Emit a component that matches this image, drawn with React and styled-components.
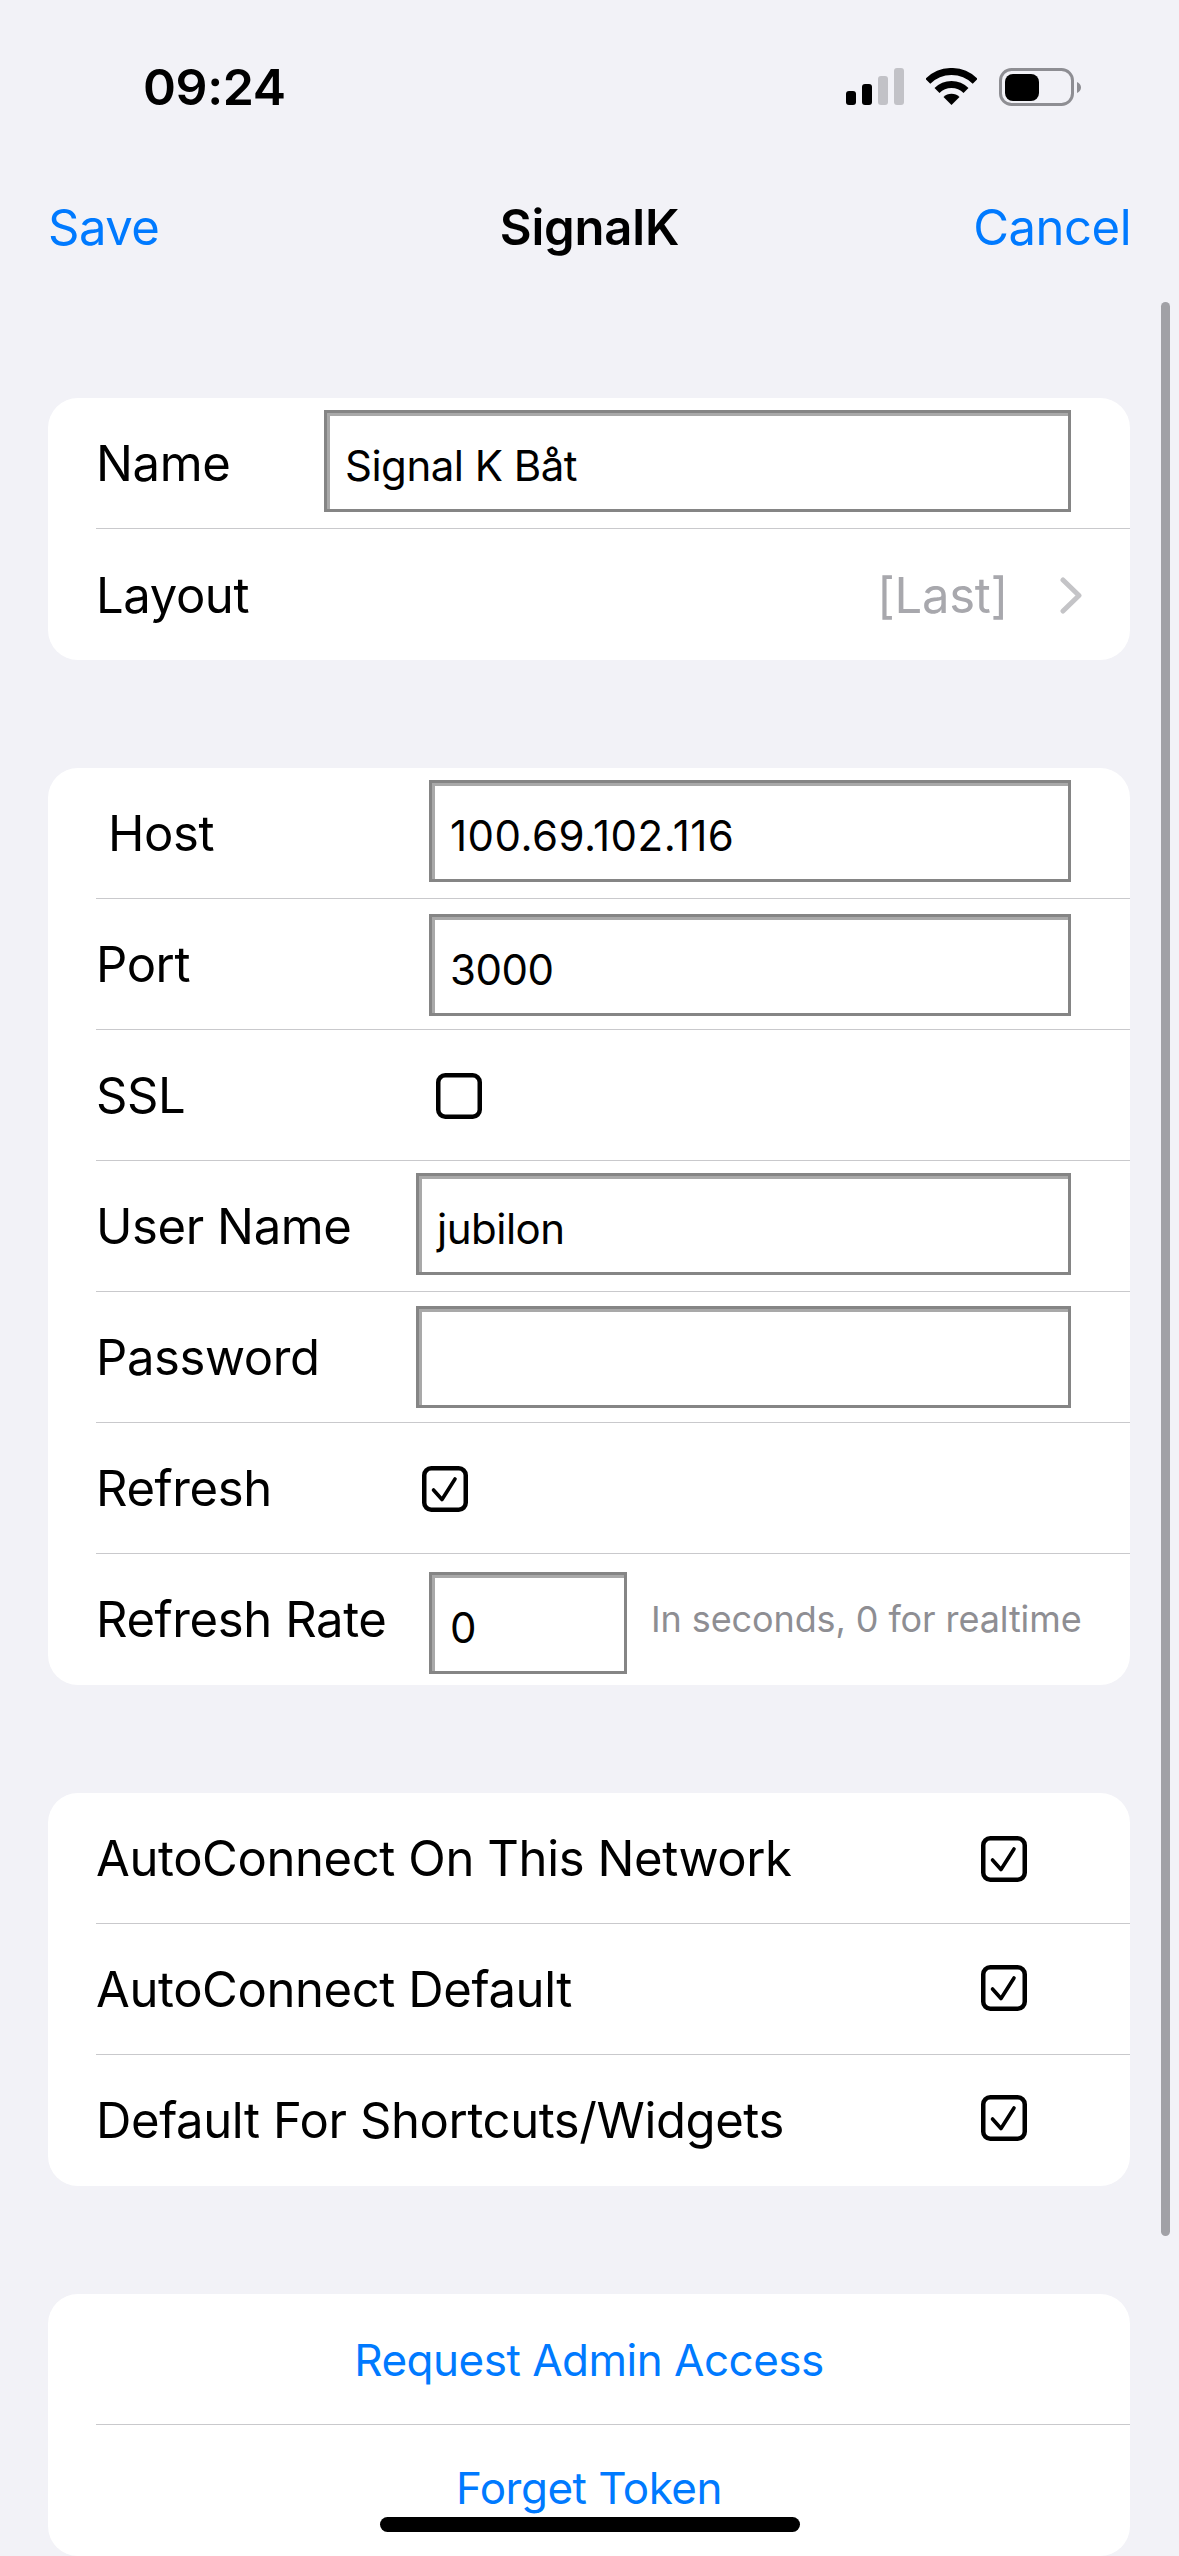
import styled, { createGlobalStyle } from "styled-components";

const GlobalStyle = createGlobalStyle`
  html, body {
    margin: 0;
    padding: 0;
    background: #f2f2f7;
  }
  * {
    box-sizing: border-box;
  }
`;

const Page = styled.div`
  position: relative;
  width: 1179px;
  height: 2556px;
  overflow: hidden;
  background: #f2f2f7;
  color: #000;
  font-family: Inter, "Liberation Sans", sans-serif;
`;

const StatusBar = styled.div`
  height: 176px;
  padding: 68px 98px 0 143px;
  display: flex;
  justify-content: space-between;
  align-items: flex-start;
`;

const Clock = styled.div`
  font-size: 50px;
  font-weight: 600;
  line-height: 38px;
  letter-spacing: -0.4px;
`;

const StatusIcons = styled.div`
  display: flex;
  align-items: flex-start;
  gap: 22px;
  svg {
    display: block;
  }
`;

const NavBar = styled.div`
  height: 100px;
  padding: 4px 48px 0 48px;
  display: grid;
  grid-template-columns: 1fr auto 1fr;
  align-items: center;
`;

const NavButton = styled.div`
  font-size: 49px;
  color: #007aff;
  line-height: 60px;
  letter-spacing: -0.5px;
  text-align: ${(p) => p.$align || "left"};
`;

const NavTitle = styled.div`
  font-size: 49px;
  font-weight: 600;
  line-height: 60px;
  letter-spacing: -0.2px;
`;

const Form = styled.div`
  margin-top: 122px;
  padding: 0 49px 0 48px;
  display: flex;
  flex-direction: column;
  gap: 108px;
`;

const Card = styled.div`
  background: #fff;
  border-radius: 30px;
  overflow: hidden;
`;

const Row = styled.div`
  height: 131px;
  margin-left: 48px;
  display: flex;
  align-items: flex-start;
  &:not(:last-child) {
    border-bottom: 1.5px solid #c9c9cc;
  }
`;

const CheckRow = styled(Row)`
  padding-right: 103px;
`;

const Label = styled.div`
  width: ${(p) => p.$width}px;
  flex-shrink: 0;
  padding-left: ${(p) => p.$indent || 0}px;
  font-size: 49px;
  line-height: ${(p) => p.$line || 131}px;
  letter-spacing: -0.4px;
  white-space: nowrap;
`;

const WideLabel = styled(Label)`
  width: auto;
  flex: 1;
`;

const Field = styled.div`
  width: ${(p) => p.$width}px;
  height: 102px;
  margin-top: ${(p) => p.$top}px;
  flex-shrink: 0;
  padding: 8px 0 0 18px;
  display: flex;
  align-items: center;
  border: 3px solid #858585;
  box-shadow: inset 3px 3px 0 #a9a9a9;
  font-size: 42px;
  letter-spacing: ${(p) => p.$spacing ?? -0.5}px;
  background: #fff;
`;

const Hint = styled.div`
  margin: 40px 0 0 24px;
  font-size: 36px;
  line-height: 50px;
  letter-spacing: -0.1px;
  color: #8e8e93;
  white-space: nowrap;
`;

const Box = styled.svg`
  display: block;
  flex-shrink: 0;
  margin-top: ${(p) => p.$top}px;
`;

const Detail = styled.div`
  margin-left: auto;
  display: flex;
  align-items: center;
  height: 132px;
  padding-right: 47px;
  gap: 52px;
  font-size: 49px;
  color: #a8a8ad;
  letter-spacing: -0.3px;
`;

const Action = styled.div`
  width: calc(100% + 48px);
  margin-left: -48px;
  text-align: center;
  color: #007aff;
  font-size: 44px;
  line-height: ${(p) => p.$line}px;
  letter-spacing: -0.5px;
`;

const Scrollbar = styled.div`
  position: absolute;
  left: 1161px;
  top: 302px;
  width: 9px;
  height: 1934px;
  border-radius: 5px;
  background: #a1a1a6;
`;

const HomeIndicator = styled.div`
  position: absolute;
  left: 380px;
  top: 2517px;
  width: 420px;
  height: 15px;
  border-radius: 8px;
  background: #000;
`;

const SignalIcon = () => (
  <svg width="58" height="37" viewBox="0 0 58 37">
    <rect x="0" y="23" width="10" height="14" rx="3" fill="#000" />
    <rect x="16" y="16" width="10" height="21" rx="3" fill="#000" />
    <rect x="32" y="8" width="10" height="29" rx="3" fill="#c2c2c7" />
    <rect x="48" y="0" width="10" height="37" rx="3" fill="#c2c2c7" />
  </svg>
);

const WifiIcon = () => (
  <svg width="51" height="37" viewBox="0 0 51 37">
    <path d="M1.8 13.3A33.5 33.5 0 0 1 49.2 13.3" fill="none" stroke="#000" strokeWidth="7" />
    <path d="M11 22.5A20.5 20.5 0 0 1 40 22.5" fill="none" stroke="#000" strokeWidth="7" />
    <path d="M25.5 37L17.5 29A11.3 11.3 0 0 1 33.5 29Z" fill="#000" />
  </svg>
);

const BatteryIcon = () => (
  <svg width="82" height="38" viewBox="0 0 82 38">
    <rect x="1.5" y="1.5" width="72" height="35" rx="11" fill="none" stroke="#8e8e93" strokeWidth="3" />
    <rect x="6" y="6" width="34" height="27" rx="8" fill="#000" />
    <path d="M78 14C80.5 15 82 17 82 19.5C82 22 80.5 24 78 25Z" fill="#8e8e93" />
  </svg>
);

const CheckBox = ({ checked, top }) => (
  <Box $top={top} width="46" height="46" viewBox="0 0 46 46">
    <rect x="2.25" y="2.25" width="41.5" height="41.5" rx="7" fill="#fff" stroke="#000" strokeWidth="4.5" />
    {checked && (
      <path
        d="M11.5 24L20 33.5L33 13"
        fill="none"
        stroke="#000"
        strokeWidth="3.6"
        strokeLinecap="round"
        strokeLinejoin="round"
      />
    )}
  </Box>
);

const Chevron = () => (
  <svg width="23" height="37" viewBox="0 0 23 37">
    <path d="M3 3L19 18.5L3 34" fill="none" stroke="#c4c4c7" strokeWidth="5" strokeLinecap="round" strokeLinejoin="round" />
  </svg>
);

export default function App() {
  return (
    <Page>
      <GlobalStyle />
      <StatusBar>
        <Clock>09:24</Clock>
        <StatusIcons>
          <SignalIcon />
          <WifiIcon />
          <BatteryIcon />
        </StatusIcons>
      </StatusBar>

      <NavBar>
        <NavButton>Save</NavButton>
        <NavTitle>SignalK</NavTitle>
        <NavButton $align="right">Cancel</NavButton>
      </NavBar>

      <Form>
        <Card>
          <Row>
            <Label $width={228}>Name</Label>
            <Field $width={747} $top={12}>Signal K Båt</Field>
          </Row>
          <Row>
            <Label $width={300} $line={133}>Layout</Label>
            <Detail>
              [Last]
              <Chevron />
            </Detail>
          </Row>
        </Card>

        <Card>
          <Row>
            <Label $width={333} $indent={12}>Host</Label>
            <Field $width={642} $top={12} $spacing={0.5}>100.69.102.116</Field>
          </Row>
          <Row>
            <Label $width={333}>Port</Label>
            <Field $width={642} $top={15}>3000</Field>
          </Row>
          <Row>
            <Label $width={340}>SSL</Label>
            <CheckBox top={43} />
          </Row>
          <Row>
            <Label $width={320}>User Name</Label>
            <Field $width={655} $top={12}>jubilon</Field>
          </Row>
          <Row>
            <Label $width={320}>Password</Label>
            <Field $width={655} $top={14} />
          </Row>
          <Row>
            <Label $width={326}>Refresh</Label>
            <CheckBox checked top={43} />
          </Row>
          <Row>
            <Label $width={333}>Refresh Rate</Label>
            <Field $width={198} $top={18}>0</Field>
            <Hint>In seconds, 0 for realtime</Hint>
          </Row>
        </Card>

        <Card>
          <CheckRow>
            <WideLabel>AutoConnect On This Network</WideLabel>
            <CheckBox checked top={43} />
          </CheckRow>
          <CheckRow>
            <WideLabel>AutoConnect Default</WideLabel>
            <CheckBox checked top={41} />
          </CheckRow>
          <CheckRow>
            <WideLabel>Default For Shortcuts/Widgets</WideLabel>
            <CheckBox checked top={40} />
          </CheckRow>
        </Card>

        <Card>
          <Row>
            <Action $line={132}>Request Admin Access</Action>
          </Row>
          <Row>
            <Action $line={127}>Forget Token</Action>
          </Row>
        </Card>
      </Form>

      <Scrollbar />
      <HomeIndicator />
    </Page>
  );
}
